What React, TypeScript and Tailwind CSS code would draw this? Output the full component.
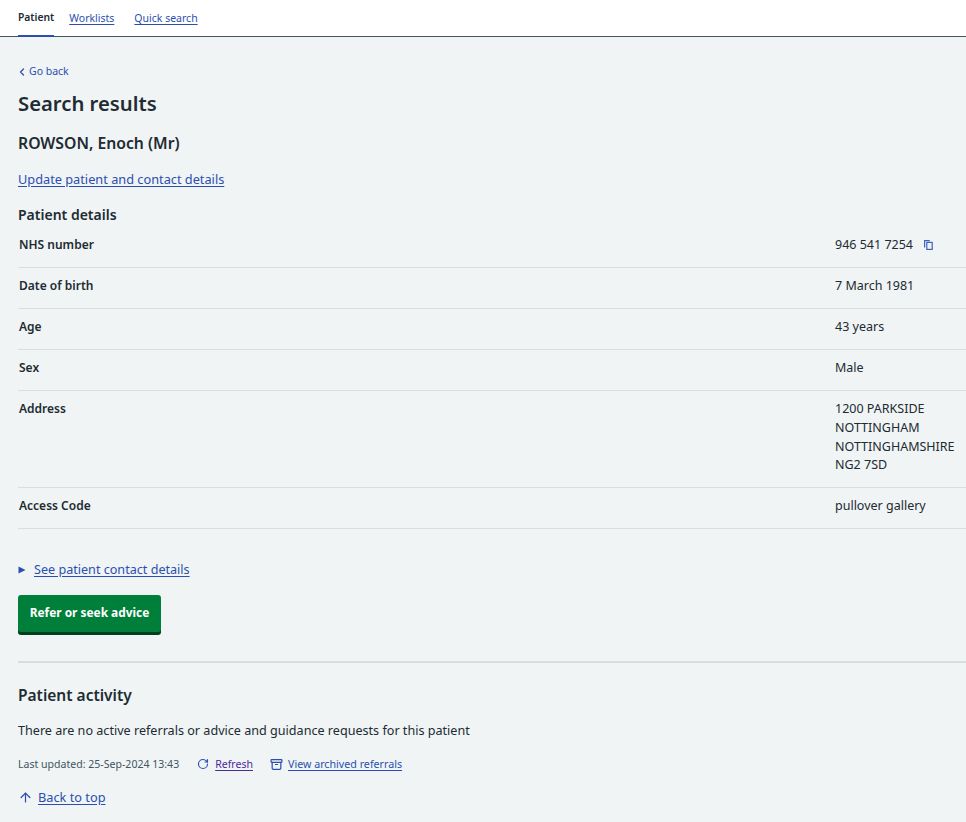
import { ChevronLeft, RotateCw, Archive, ArrowUp } from "lucide-react";

const link = "text-[#2b4fb0] underline underline-offset-2";

const rows = [
  { label: "NHS number", value: ["946 541 7254"], copy: true },
  { label: "Date of birth", value: ["7 March 1981"] },
  { label: "Age", value: ["43 years"] },
  { label: "Sex", value: ["Male"] },
  {
    label: "Address",
    value: ["1200 PARKSIDE", "NOTTINGHAM", "NOTTINGHAMSHIRE", "NG2 7SD"],
  },
  { label: "Access Code", value: ["pullover gallery"] },
];

function CopyIcon() {
  return (
    <svg
      width="9"
      height="10"
      viewBox="0 0 9 10"
      fill="none"
      stroke="currentColor"
      strokeWidth="1.2"
      className="ml-[11px] text-[#3f63bd]"
    >
      <rect x="2.8" y="2.4" width="5.4" height="7" />
      <path d="M0.6 7.5V0.6H5.8" />
    </svg>
  );
}

export default function App() {
  return (
    <div className="min-h-[822px] bg-[#f0f4f5] font-['Noto_Sans',sans-serif] text-[#212b32]">
      <nav className="flex h-[37px] gap-[15px] border-b border-[#425563] bg-white px-[18px] text-[10.5px]">
        <div className="flex h-[37px] items-center border-b-2 border-[#2b4fb0] pt-px text-[10.3px] font-semibold">
          Patient
        </div>
        <a className={`mr-[5px] flex h-[36px] items-center pt-px ${link}`}>Worklists</a>
        <a className={`flex h-[36px] items-center pt-px ${link}`}>Quick search</a>
      </nav>

      <main className="pl-[18px]">
        <a className="mt-[27px] flex h-4 items-center gap-[1px] text-[10.5px] text-[#2b4fb0]">
          <ChevronLeft size={12} strokeWidth={2.5} className="-ml-[2px]" />
          Go back
        </a>
        <h1 className="mt-[8px] text-[20.25px] leading-[30px] font-semibold">
          Search results
        </h1>
        <h2 className="mt-[13px] text-[15.75px] leading-[24px] font-semibold">
          ROWSON, Enoch (Mr)
        </h2>
        <a className={`mt-[14px] block text-[12.75px] leading-[20px] ${link}`}>
          Update patient and contact details
        </a>
        <h3 className="mt-[16px] text-[14px] leading-[20px] font-semibold">
          Patient details
        </h3>

        <dl className="text-[12.5px] leading-[18.75px]">
          {rows.map((row) => (
            <div
              key={row.label}
              className="flex border-b border-[#d8dde0] pt-[9px] pb-[12.25px] first:pt-[11px]"
            >
              <dt className="w-[817px] pl-px text-[12px] font-semibold">{row.label}</dt>
              <dd className="flex-1">
                {row.value.map((line) => (
                  <div key={line} className="flex items-center whitespace-nowrap">
                    {line}
                    {row.copy && <CopyIcon />}
                  </div>
                ))}
              </dd>
            </div>
          ))}
        </dl>

        <div className="mt-[31px] flex items-center gap-[8px] text-[12.6px] leading-[20px]">
          <svg width="8" height="8" viewBox="0 0 8 8" className="text-[#2b4fb0]">
            <path d="M0.5 0.5L7.5 4L0.5 7.5Z" fill="currentColor" />
          </svg>
          <a className={link}>See patient contact details</a>
        </div>

        <button className="mt-[15px] flex h-[37px] w-[143px] items-center justify-center rounded-[3px] bg-[#007f3b] pb-[2px] text-[11.9px] font-bold text-white shadow-[0_3px_0_#00401e]">
          Refer or seek advice
        </button>

        <hr className="mt-[29px] border-t-2 border-[#d8dde0]" />

        <h2 className="mt-[20px] text-[15.5px] leading-[24px] font-semibold">
          Patient activity
        </h2>
        <p className="mt-[14px] text-[12.6px] leading-[20px]">
          There are no active referrals or advice and guidance requests for this patient
        </p>

        <div className="mt-[15px] flex items-center text-[10.55px] leading-4">
          <span className="text-[#425563]">Last updated: 25-Sep-2024 13:43</span>
          <RotateCw size={12} strokeWidth={2.25} className="mr-[6px] ml-[18px] text-[#2b4fb0]" />
          <a className="text-[#4b2a9a] underline underline-offset-2">Refresh</a>
          <Archive size={13} strokeWidth={2.25} className="mr-[5px] ml-[17px] text-[#2b4fb0]" />
          <a className={`text-[10.7px] ${link}`}>View archived referrals</a>
        </div>

        <div className="mt-[15px] flex items-center gap-[5px] text-[12.75px] leading-[20px]">
          <ArrowUp size={15} className="text-[#2b4fb0]" />
          <a className={link}>Back to top</a>
        </div>
      </main>
    </div>
  );
}
